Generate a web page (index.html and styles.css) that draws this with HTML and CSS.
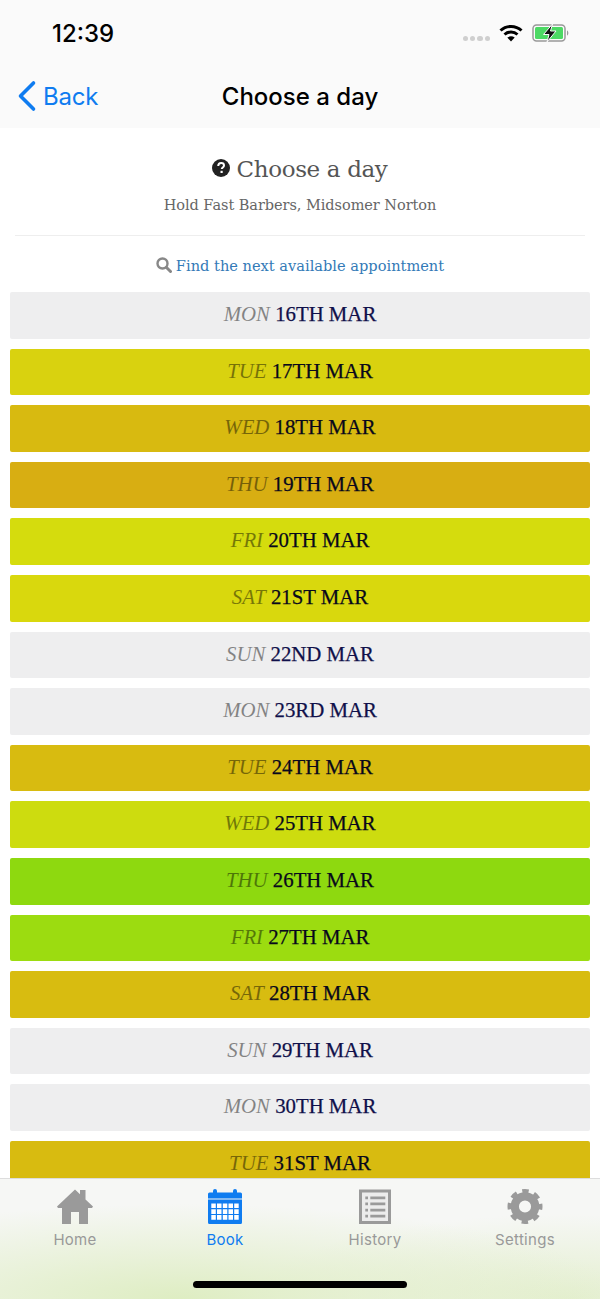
FILE: index.html
```html
<!DOCTYPE html>
<html lang="en">
<head>
  <meta charset="UTF-8">
  <title>Choose a day</title>
  <link rel="stylesheet" href="styles.css">
</head>
<body>
  <div class="screen">

    <!-- status bar -->
    <div class="statusBar">
      <span class="clock">12:39</span>
      <div class="statusIcons">
        <span class="signal"><i></i><i></i><i></i><i></i></span>
        <svg class="wifi" width="24" height="18" viewBox="0 0 24 18">
          <path d="M1.500 6.500C7.300 1 16.700 1 22.500 6.500" fill="none" stroke="#000" stroke-width="3"/>
          <path d="M5.500 10.500c3.700-3.300 9.300-3.300 13 0" fill="none" stroke="#000" stroke-width="3"/>
          <path d="M12 17.500 8.300 13.600c2.200-1.700 5.200-1.700 7.400 0z" fill="#000"/>
        </svg>
        <svg class="battery" width="38" height="18" viewBox="0 0 38 18">
          <rect x="1" y="1" width="32" height="16" rx="3.500" fill="none" stroke="#999" stroke-width="1.500"/>
          <rect x="3" y="3" width="28" height="12" rx="1.500" fill="#4cd964"/>
          <path d="M35 6.500c1.800.5 1.800 4.500 0 5z" fill="#999"/>
          <path d="M20.500 0 11.500 10.500h5.500l-2 7.500 9-11h-5.500z" fill="#111" stroke="#fafafa" stroke-width="1"/>
        </svg>
      </div>
    </div>

    <!-- nav bar -->
    <div class="navBar">
      <a class="backLink">
        <svg width="20" height="32" viewBox="0 0 20 32">
          <path d="M16.500 3 3.500 16l13 13" fill="none" stroke="#0f7cf0" stroke-width="3.600" stroke-linecap="round" stroke-linejoin="round"/>
        </svg>
        Back
      </a>
      <span class="navTitle">Choose a day</span>
    </div>

    <div class="content">
      <div class="pageHead">
        <h1>
          <svg class="helpIcon" width="18" height="18" viewBox="0 0 18 18">
            <circle cx="9" cy="9" r="9" fill="#222"/>
            <path d="M6.200 7c.1-1.900 1.400-2.900 3-2.900 1.600 0 2.800 1 2.800 2.400 0 1.900-2.200 1.900-2.200 3.400" fill="none" stroke="#fff" stroke-width="2"/>
            <rect x="8.500" y="11.800" width="2.200" height="2.200" fill="#fff"/>
          </svg>
          Choose a day
        </h1>
        <p>Hold Fast Barbers, Midsomer Norton</p>
      </div>

      <div class="findNext">
        <svg width="16" height="16" viewBox="0 0 16 16">
          <circle cx="6.500" cy="6.500" r="5" fill="none" stroke="#888" stroke-width="2.400"/>
          <path d="M10.500 10.500 14.500 14.500" stroke="#888" stroke-width="3" stroke-linecap="round"/>
        </svg>
        <a>Find the next available appointment</a>
      </div>

      <div class="dayList">
        <div class="day closed"><em>MON</em> 16TH MAR</div>
        <div class="day" style="background:#d9d20f"><em>TUE</em> 17TH MAR</div>
        <div class="day" style="background:#d8ba10"><em>WED</em> 18TH MAR</div>
        <div class="day" style="background:#d8ae12"><em>THU</em> 19TH MAR</div>
        <div class="day" style="background:#d5dc0d"><em>FRI</em> 20TH MAR</div>
        <div class="day" style="background:#d9d80d"><em>SAT</em> 21ST MAR</div>
        <div class="day closed"><em>SUN</em> 22ND MAR</div>
        <div class="day closed"><em>MON</em> 23RD MAR</div>
        <div class="day" style="background:#d8bb10"><em>TUE</em> 24TH MAR</div>
        <div class="day" style="background:#cddc0f"><em>WED</em> 25TH MAR</div>
        <div class="day" style="background:#8ed90f"><em>THU</em> 26TH MAR</div>
        <div class="day" style="background:#9cdc10"><em>FRI</em> 27TH MAR</div>
        <div class="day" style="background:#d8bc10"><em>SAT</em> 28TH MAR</div>
        <div class="day closed"><em>SUN</em> 29TH MAR</div>
        <div class="day closed"><em>MON</em> 30TH MAR</div>
        <div class="day" style="background:#d8bb10"><em>TUE</em> 31ST MAR</div>
      </div>
    </div>

    <!-- tab bar -->
    <div class="tabBar">
      <div class="tab">
        <svg width="36" height="35" viewBox="0 0 36 35">
          <path d="M0 17.500 18 .5l5 4.700V1h5.500v9.500L36 17.500l-1 1.500H31V35H22V23h-8v12H5V19H1z" fill="#9a9a9a"/>
        </svg>
        <span>Home</span>
      </div>
      <div class="tab active">
        <svg width="34" height="35" viewBox="0 0 34 35">
          <path d="M0 5a1.500 1.500 0 0 1 1.500-1.500H5V2a2 2 0 0 1 4 0v1.500h16V2a2 2 0 0 1 4 0v1.500h3.500A1.500 1.500 0 0 1 34 5v4.500H0zM0 10.500h34V33.500A1.500 1.500 0 0 1 32.500 35H1.500A1.500 1.500 0 0 1 0 33.500z" fill="#0f7cf0"/>
          <path d="M3.300 14.500h4.500v4.600H3.300zM9 14.500h4.500v4.600H9zM14.800 14.500h4.500v4.600h-4.500zM20.500 14.500H25v4.600h-4.500zM26.200 14.500h4.500v4.600h-4.500zM3.300 20.300h4.500v4.600H3.300zM9 20.300h4.500v4.600H9zM14.800 20.300h4.500v4.600h-4.500zM20.500 20.300H25v4.600h-4.500zM26.200 20.300h4.500v4.600h-4.500zM3.300 26.100h4.500v4.600H3.300zM9 26.100h4.500v4.600H9zM14.800 26.100h4.500v4.600h-4.500zM20.500 26.100H25v4.600h-4.500zM26.200 26.100h4.500v4.600h-4.500z" fill="#fff"/>
        </svg>
        <span>Book</span>
      </div>
      <div class="tab">
        <svg width="32" height="35" viewBox="0 0 32 35">
          <rect x="1.500" y="2" width="29" height="31.500" fill="#ececec" stroke="#9a9a9a" stroke-width="3"/>
          <path d="M6.300 7.500H9v2.700H6.300zM11.300 7.500h15v2.700h-15zM6.300 13.500H9v2.700H6.300zM11.300 13.500h15v2.700h-15zM6.300 19.700H9v2.700H6.300zM11.300 19.700h15v2.700h-15zM6.300 25.700H9v2.700H6.300zM11.300 25.700h15v2.700h-15z" fill="#9a9a9a"/>
        </svg>
        <span>History</span>
      </div>
      <div class="tab">
        <svg width="36" height="35" viewBox="0 0 36 36">
          <circle cx="18" cy="18" r="10.500" fill="none" stroke="#9a9a9a" stroke-width="8.500"/>
          <circle cx="18" cy="18" r="15.500" fill="none" stroke="#9a9a9a" stroke-width="5" stroke-dasharray="6.500 5.670" stroke-dashoffset="3.250"/>
        </svg>
        <span>Settings</span>
      </div>
      <div class="homeIndicator"></div>
    </div>

  </div>
</body>
</html>
```

FILE: styles.css
```css
body {
  margin: 0;
  background: #fff;
  font-family: "DejaVu Serif", "Liberation Serif", serif;
}

.screen {
  position: relative;
  width: 600px;
  height: 1299px;
  overflow: hidden;
}

.statusBar {
  height: 64px;
  padding: 2px 30px 0 52px;
  box-sizing: border-box;
  background: #fafafa;
  display: flex;
  justify-content: space-between;
  align-items: center;
  font-family: "Inter", "Liberation Sans", sans-serif;
}

.clock {
  font-size: 24px;
  font-weight: 500;
  color: #000;
}

.statusIcons {
  display: flex;
  align-items: center;
  gap: 9px;
}

.signal {
  display: flex;
  gap: 2px;
  margin-top: 11px;
}

.signal i {
  width: 5.300px;
  height: 5.300px;
  border-radius: 50%;
  background: #cfcfcf;
}

.navBar {
  position: relative;
  height: 64px;
  background: #fafafa;
  display: flex;
  align-items: center;
  justify-content: center;
}

.navTitle {
  font-family: "Inter", "Liberation Sans", sans-serif;
  font-size: 24px;
  font-weight: 500;
  color: #000;
}

.backLink {
  position: absolute;
  left: 17px;
  top: 16px;
  display: flex;
  align-items: center;
  gap: 6px;
  font-family: "Inter", "Liberation Sans", sans-serif;
  font-size: 24px;
  letter-spacing: -0.2px;
  color: #0f7cf0;
}

.pageHead {
  margin: 0 15px;
  padding: 25px 0 19px;
  text-align: center;
  border-bottom: 1px solid #eee;
}

.pageHead h1 {
  margin: 0;
  font-size: 23px;
  font-weight: 400;
  letter-spacing: -0.35px;
  line-height: 32px;
  color: #555;
}

.helpIcon {
  margin-right: -1px;
}

.pageHead p {
  margin: 9px 0 0;
  font-size: 14.500px;
  letter-spacing: -0.05px;
  line-height: 22px;
  color: #666;
}

.findNext {
  height: 56px;
  padding-top: 2px;
  box-sizing: border-box;
  display: flex;
  align-items: center;
  justify-content: center;
  gap: 4px;
  font-size: 14.600px;
  color: #337ab7;
}

.dayList {
  padding: 0 10px;
  display: flex;
  flex-direction: column;
  gap: 10px;
}

.day {
  height: 46.600px;
  line-height: 44px;
  border-radius: 2px;
  background: #eeeeef;
  text-align: center;
  font-family: "Liberation Serif", serif;
  font-size: 20.800px;
  -webkit-text-stroke: 0.25px;
  color: #08081c;
}

.day.closed {
  color: #10104a;
}

.day em {
  opacity: 0.45;
  color: #000;
  -webkit-text-stroke: 0;
}

.tabBar {
  position: absolute;
  left: 0;
  right: 0;
  bottom: 0;
  height: 121px;
  border-top: 1px solid #ddd;
  background:
    radial-gradient(ellipse 440px 95px at 30% 100%, #deedc2 0%, rgba(222, 237, 194, 0) 100%),
    radial-gradient(ellipse 320px 85px at 95% 100%, #e4efcf 0%, rgba(228, 239, 207, 0) 100%),
    #f6f7f5;
  display: grid;
  grid-template-columns: repeat(4, 1fr);
  align-items: start;
  padding-top: 10px;
  box-sizing: border-box;
}

.tab {
  display: flex;
  flex-direction: column;
  align-items: center;
  gap: 6px;
  font-family: "Inter", "Liberation Sans", sans-serif;
  font-size: 15px;
  letter-spacing: 0.3px;
  color: #999;
}

.tab.active {
  color: #0f7cf0;
}

.homeIndicator {
  position: absolute;
  left: 193px;
  bottom: 11px;
  width: 214px;
  height: 7px;
  border-radius: 4px;
  background: #000;
}
```
